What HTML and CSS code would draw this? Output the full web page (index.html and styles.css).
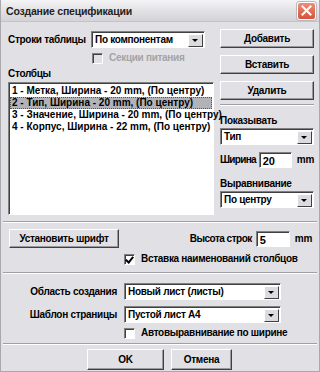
FILE: index.html
```html
<!DOCTYPE html>
<html lang="ru">
<head>
    <meta charset="UTF-8">
    <title>Создание спецификации</title>
    <link rel="stylesheet" href="styles.css">
</head>
<body>
    <div class="window">
        <div class="titlebar">
            <span class="title">Создание спецификации</span>
            <span class="close">
                <svg width="11" height="11" viewBox="0 0 11 11"><path d="M1.5 1.5 L9.5 9.5 M9.5 1.5 L1.5 9.5" stroke="#fff" stroke-width="2" stroke-linecap="square"/></svg>
            </span>
        </div>

        <div class="content">
            <div class="top">
                <div class="left">
                    <div class="row">
                        <span class="lbl rows-lbl">Строки таблицы</span>
                        <div class="combo w-rows"><span class="val">По компонентам</span><span class="arrow"></span></div>
                    </div>
                    <label class="check disabled power"><span class="box"></span>Секции питания</label>
                    <div class="lbl cols-lbl">Столбцы</div>
                    <div class="listbox">
                        <div class="item">1 - Метка, Ширина - 20 mm, (По центру)</div>
                        <div class="item selected">2 - Тип, Ширина - 20 mm, (По центру)</div>
                        <div class="item">3 - Значение, Ширина - 20 mm, (По центру)</div>
                        <div class="item">4 - Корпус, Ширина - 22 mm, (По центру)</div>
                    </div>
                </div>

                <div class="right">
                    <button class="btn side-btn">Добавить</button>
                    <button class="btn side-btn">Вставить</button>
                    <button class="btn side-btn last">Удалить</button>
                    <div class="sep"></div>
                    <div class="lbl">Показывать</div>
                    <div class="combo w-full"><span class="val">Тип</span><span class="arrow"></span></div>
                    <div class="row width-row">
                        <span class="lbl width-lbl">Ширина</span>
                        <div class="field">20</div>
                        <span class="lbl unit">mm</span>
                    </div>
                    <div class="lbl">Выравнивание</div>
                    <div class="combo w-full"><span class="val">По центру</span><span class="arrow"></span></div>
                </div>
            </div>

            <div class="sep full sep-a"></div>

            <div class="font-row">
                <button class="btn font-btn">Установить шрифт</button>
                <div class="row">
                    <span class="lbl height-lbl">Высота строк</span>
                    <div class="field">5</div>
                    <span class="lbl unit">mm</span>
                </div>
            </div>
            <label class="check indent"><span class="box checked"></span>Вставка наименований столбцов</label>

            <div class="sep full sep-b"></div>

            <div class="form">
                <span class="lbl form-lbl">Область создания</span>
                <div class="combo w-form"><span class="val">Новый лист (листы)</span><span class="arrow"></span></div>
                <span class="lbl form-lbl">Шаблон страницы</span>
                <div class="combo w-form"><span class="val">Пустой лист А4</span><span class="arrow"></span></div>
                <span></span>
                <label class="check"><span class="box"></span>Автовыравнивание по ширине</label>
            </div>

            <div class="sep full sep-c"></div>

            <div class="actions">
                <button class="btn ok-btn">OK</button>
                <button class="btn cancel-btn">Отмена</button>
            </div>
        </div>
    </div>
</body>
</html>
```

FILE: styles.css
```css
body {
    margin: 0;
    padding: 0;
    background: #e1e0e4;
    font-family: "Liberation Sans", Arial, sans-serif;
    font-size: 10px;
    line-height: 12px;
    font-weight: bold;
    color: #000;
}
.window {
    width: 320px;
    height: 372px;
    box-sizing: border-box;
    border: 1px solid #a9a9ad;
    border-top: none;
    background: #e1e0e4;
    display: flex;
    flex-direction: column;
    overflow: hidden;
}
.titlebar {
    height: 21px;
    flex-shrink: 0;
    display: flex;
    align-items: center;
    justify-content: space-between;
    padding: 0 3px 0 5px;
    background: linear-gradient(#f4f4f6, #e4e4e7 45%, #d3d3d8);
    border-bottom: 1px solid #c4c4c8;
}
.title {
    font-size: 10.5px;
    color: #222;
    letter-spacing: -0.2px;
}
.close {
    width: 19px;
    height: 18px;
    box-sizing: border-box;
    border: 1px solid #fff;
    border-radius: 3px;
    background: linear-gradient(#ec8d79, #d4533c);
    display: flex;
    align-items: center;
    justify-content: center;
    box-shadow: 0 0 0 1px #b9b9bd;
}
.content {
    padding: 6px 5px 0 7px;
    display: flex;
    flex-direction: column;
}
.top {
    display: flex;
    gap: 6px;
}
.left {
    width: 206px;
    display: flex;
    flex-direction: column;
}
.right {
    width: 94px;
    display: flex;
    flex-direction: column;
}
.row {
    display: flex;
    align-items: center;
}
.lbl,
.check,
.btn,
.val {
    letter-spacing: -0.3px;
}
.lbl {
    white-space: nowrap;
    height: 12px;
}
.rows-lbl {
    width: 83px;
    margin-top: 3px;
}
.combo {
    height: 17px;
    box-sizing: border-box;
    background: #fff;
    border: 1px solid;
    border-color: #808080 #fff #fff #808080;
    box-shadow: inset 1px 1px #404040;
    display: flex;
    align-items: center;
    justify-content: space-between;
    padding: 1px 1px 0 3px;
}
.w-rows {
    width: 114px;
    margin-top: 3px;
}
.w-full {
    width: 94px;
}
.w-form {
    width: 157px;
}
.arrow {
    width: 15px;
    height: 13px;
    box-sizing: border-box;
    background: #dcdce0;
    border: 1px solid;
    border-color: #fff #404040 #404040 #fff;
    position: relative;
}
.arrow::after {
    content: "";
    position: absolute;
    left: 3px;
    top: 4px;
    border-left: 3px solid transparent;
    border-right: 3px solid transparent;
    border-top: 3px solid #000;
}
.check {
    display: flex;
    align-items: center;
    gap: 6px;
    height: 14px;
}
.check.disabled {
    color: #a4a4a8;
}
.power {
    margin: 3px 0 0 84px;
}
.box {
    width: 11px;
    height: 11px;
    box-sizing: border-box;
    background: #fff;
    border: 1px solid;
    border-color: #808080 #fff #fff #808080;
    box-shadow: inset 1px 1px #404040;
    position: relative;
}
.disabled .box {
    background: #e1e0e4;
}
.box.checked::after {
    content: "";
    position: absolute;
    left: 2px;
    top: 0px;
    width: 3px;
    height: 6px;
    border: solid #000;
    border-width: 0 2px 2px 0;
    transform: rotate(40deg);
}
.cols-lbl {
    margin-top: 3px;
}
.listbox {
    margin-top: 2px;
    height: 133px;
    box-sizing: border-box;
    background: #fff;
    border: 1px solid;
    border-color: #808080 #fff #fff #808080;
    box-shadow: inset 1px 1px #404040;
    padding: 2px 1px;
}
.item {
    height: 12px;
    line-height: 12px;
    padding-left: 2px;
    white-space: nowrap;
}
.item.selected {
    background: #b2b2b9;
    outline: 1px dotted #555;
    outline-offset: -1px;
}
.btn {
    font: inherit;
    background: #e1e0e4;
    border: 1px solid;
    border-color: #fff #404040 #404040 #fff;
    box-shadow: inset -1px -1px #9a9a9e;
    padding: 0;
    color: #000;
}
.side-btn {
    height: 19px;
    width: 94px;
    margin-bottom: 7px;
}
.side-btn:first-child {
    margin-top: 1px;
}
.side-btn.last {
    margin-bottom: 4px;
}
.sep {
    height: 0;
    border-top: 1px solid #a0a0a4;
    border-bottom: 1px solid #fff;
    margin-bottom: 9px;
}
.right .lbl {
    margin-bottom: 1px;
}
.width-row {
    margin: 7px 0 10px;
}
.right .width-lbl {
    margin-bottom: 0;
    width: 40px;
    letter-spacing: -0.7px;
}
.right .width-row .unit {
    margin: 0 0 0 5px;
}
.field {
    height: 16px;
    width: 34px;
    box-sizing: border-box;
    background: #fff;
    border: 1px solid;
    border-color: #808080 #fff #fff #808080;
    box-shadow: inset 1px 1px #404040;
    padding: 2px 0 0 3px;
    font-size: 11px;
}
.sep.full {
    margin: 0 -3px 0 -5px;
}
.sep-a {
    margin-top: 6px !important;
}
.font-row {
    margin-top: 6px;
    display: flex;
    justify-content: space-between;
    align-items: center;
    padding-right: 2px;
}
.font-btn {
    width: 110px;
    height: 19px;
    margin-left: 1px;
}
.height-lbl {
    margin-right: 4px;
    letter-spacing: -0.5px;
}
.font-row .unit {
    margin-left: 5px;
}
.indent {
    margin: 4px 0 0 116px;
}
.sep-b {
    margin-top: 6px !important;
}
.form {
    margin-top: 9px;
    display: grid;
    grid-template-columns: 109px auto;
    column-gap: 7px;
    row-gap: 6px;
    align-items: center;
}
.form-lbl {
    text-align: right;
}
.form .check {
    margin-top: -3px;
}
.sep-c {
    margin-top: 3px !important;
}
.actions {
    display: flex;
    justify-content: center;
    gap: 7px;
    margin-top: 4px;
    padding-right: 3px;
}
.ok-btn {
    width: 77px;
    height: 21px;
}
.cancel-btn {
    width: 61px;
    height: 21px;
}
```
